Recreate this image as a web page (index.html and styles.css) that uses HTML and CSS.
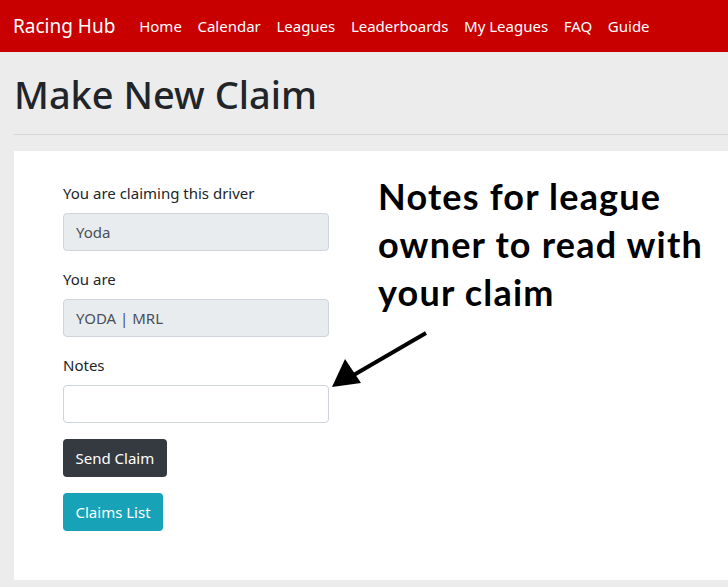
FILE: index.html
```html
<!DOCTYPE html>
<html lang="en">
<head>
    <meta charset="UTF-8">
    <meta name="viewport" content="width=device-width, initial-scale=1.0">
    <title>Make New Claim - Racing Hub</title>
    <link rel="stylesheet" href="styles.css">
</head>
<body>

    <!-- Navbar -->
    <header class="navbar">
        <a class="brand" href="#">Racing Hub</a>
        <ul class="nav-links">
            <li><a href="#">Home</a></li>
            <li><a href="#">Calendar</a></li>
            <li><a href="#">Leagues</a></li>
            <li><a href="#">Leaderboards</a></li>
            <li><a href="#">My Leagues</a></li>
            <li><a href="#">FAQ</a></li>
            <li><a href="#">Guide</a></li>
        </ul>
    </header>

    <div class="page">
        <h1>Make New Claim</h1>
        <hr>

        <div class="card">
            <form class="claim-form">
                <div class="form-group">
                    <label for="driver">You are claiming this driver</label>
                    <input type="text" id="driver" value="Yoda" readonly>
                </div>
                <div class="form-group">
                    <label for="member">You are</label>
                    <input type="text" id="member" value="YODA | MRL" readonly>
                </div>
                <div class="form-group">
                    <label for="notes">Notes</label>
                    <input type="text" id="notes">
                </div>
                <button type="button" class="btn btn-dark">Send Claim</button>
                <button type="button" class="btn btn-info">Claims List</button>
            </form>

            <p class="callout">Notes for league owner to read with your claim</p>

            <!-- annotation arrow pointing at the notes box -->
            <svg class="arrow" width="100" height="60" viewBox="0 0 100 60">
                <line x1="94" y1="2" x2="20" y2="45" stroke="#000" stroke-width="4"/>
                <polygon points="0,56 13,28 29,52" fill="#000"/>
            </svg>
        </div>
    </div>

</body>
</html>
```

FILE: styles.css
```css
/* Reset */
* {
    margin: 0;
    padding: 0;
    box-sizing: border-box;
}

body {
    font-family: 'Noto Sans', 'Open Sans', sans-serif;
    background-color: #ececec;
    color: #212529;
    font-size: 16px;
    line-height: 1.5;
}

/* Navbar */
.navbar {
    background-color: #c80000;
    height: 52px;
    display: flex;
    align-items: center;
    padding: 0 13px;
}

.brand {
    color: #fff;
    text-decoration: none;
    font-size: 19px;
    margin-right: 16px;
}

.nav-links {
    list-style-type: none;
    display: flex;
}

.nav-links a {
    display: block;
    color: #fff;
    text-decoration: none;
    font-size: 15px;
    padding: 8px 7.8px;
}

/* Page */
.page {
    padding: 0 0 0 14px;
}

h1 {
    font-size: 38px;
    font-weight: 500;
    line-height: 1.2;
    margin-top: 20px;
    margin-bottom: 8px;
}

hr {
    border: 0;
    border-top: 1px solid #d6d6d6;
    margin: 16px 0;
}

.card {
    position: relative;
    background-color: #fff;
    display: flex;
    gap: 49px;
    padding: 30px 0 49px 49px;
}

.claim-form {
    width: 266px;
    display: flex;
    flex-direction: column;
    align-items: flex-start;
}

.form-group {
    width: 100%;
    margin-bottom: 16px;
}

label {
    display: block;
    font-size: 15px;
    line-height: 24px;
    margin-bottom: 8px;
}

input[type="text"] {
    width: 100%;
    height: 38px;
    padding: 6px 12px;
    font-family: inherit;
    font-size: 15px;
    color: #495057;
    background-color: #fff;
    border: 1px solid #ced4da;
    border-radius: 4px;
}

input[readonly] {
    background-color: #e9ecef;
}

.btn {
    height: 38px;
    padding: 6px 12.5px;
    font-family: inherit;
    font-size: 15px;
    color: #fff;
    border: none;
    border-radius: 4px;
    margin-bottom: 16px;
}

.btn:last-child {
    margin-bottom: 0;
}

.btn-dark {
    background-color: #343a40;
}

.btn-info {
    background-color: #17a2b8;
}

/* Annotation */
.callout {
    width: 350px;
    font-family: 'Lato', sans-serif;
    font-weight: 700;
    font-size: 36px;
    line-height: 48px;
    letter-spacing: 1.2px;
    color: #000;
    margin-top: -9px;
}

.arrow {
    position: absolute;
    left: 318px;
    top: 180px;
}
```
